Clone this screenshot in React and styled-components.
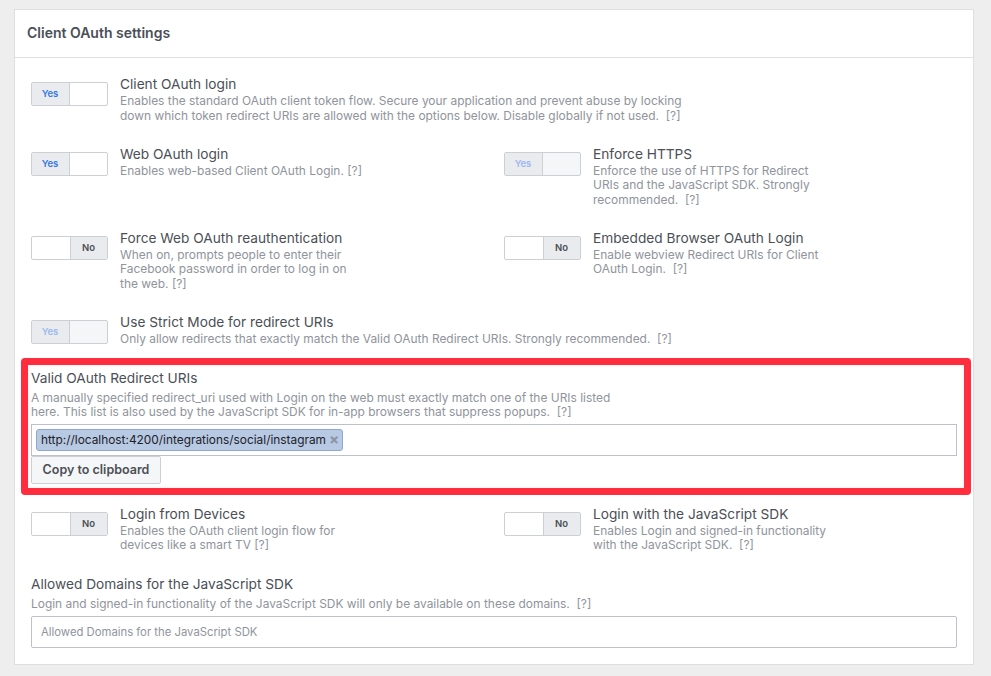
import styled, { createGlobalStyle } from "styled-components";

const GlobalStyle = createGlobalStyle`
  html, body { margin: 0; padding: 0; background: #eeeeee; }
  body { font-family: Inter, "Liberation Sans", sans-serif; }
`;

const Page = styled.div`
  width: 991px;
  height: 676px;
  padding: 9px 17px 0 14px;
  box-sizing: border-box;
  overflow: hidden;
`;

const Panel = styled.section`
  background: #ffffff;
  border: 1px solid #dddfe2;
  box-sizing: border-box;
  height: 656px;
`;

const PanelHeader = styled.h2`
  margin: 0;
  height: 45px;
  padding: 0 0 2px 12px;
  border-bottom: 1px solid #dddfe2;
  display: flex;
  align-items: center;
  font-size: 14px;
  font-weight: 600;
  color: #4b4f56;
`;

const PanelBody = styled.div`
  padding: 18px 16px 0;
`;

const Grid = styled.div`
  display: grid;
  grid-template-columns: 473px 1fr;
  row-gap: 22.7px;
  margin-top: ${(p) => p.$top || 0}px;
`;

const Setting = styled.div`
  display: flex;
  gap: 12px;
  grid-column: ${(p) => (p.$wide ? "1 / -1" : "auto")};
`;

const Toggle = styled.div`
  flex: none;
  width: 77px;
  height: 24px;
  margin-top: 6px;
  box-sizing: border-box;
  display: flex;
  justify-content: ${(p) => (p.$on ? "flex-start" : "flex-end")};
  border: 1px solid #ccd0d5;
  border-radius: 2px;
  background: ${(p) => (p.$disabled ? "#f5f6f7" : "#ffffff")};
`;

const Knob = styled.span`
  width: ${(p) => (p.$on ? 38 : 37)}px;
  box-sizing: border-box;
  padding: 0 1px 1px 0;
  display: flex;
  align-items: center;
  justify-content: center;
  background: #e9ebee;
  font-size: 9.5px;
  font-weight: 600;
  border-${(p) => (p.$on ? "right" : "left")}: 1px solid #ccd0d5;
  color: ${(p) => (p.$on ? (p.$disabled ? "#9cb9f0" : "#3578e5") : "#4b4f56")};
`;

const Label = styled.div`
  font-size: 13.7px;
  line-height: 16px;
  color: #4b4f56;
`;

const Help = styled.div`
  font-size: 11.95px;
  line-height: 14.5px;
  color: #90949c;
  margin-top: ${(p) => p.$top || 2}px;
`;

const Field = styled.div`
  position: relative;
  margin-top: 23px;
`;

const Highlight = styled.div`
  position: absolute;
  top: -12px;
  left: -10px;
  right: -14px;
  bottom: -11px;
  border: 7px solid #ff2d3d;
  border-radius: 4px;
  box-shadow: inset 0 0 4px rgba(0, 0, 0, 0.08);
  pointer-events: none;
`;

const TokenBox = styled.div`
  height: 32px;
  margin-top: 4px;
  box-sizing: border-box;
  border: 1px solid #bdc1c9;
  padding: 4px;
  display: flex;
  align-items: flex-start;
`;

const Token = styled.span`
  height: 22px;
  box-sizing: border-box;
  padding: 0 3px 0 4px;
  display: inline-flex;
  align-items: center;
  gap: 3px;
  background: #b8c9e3;
  border: 1px solid #8fa8d2;
  border-radius: 3px;
  font-size: 11.88px;
  color: #1d2129;
`;

const TokenClose = styled.span`
  color: #8b93a5;
  font-size: 15px;
  line-height: 1;
  font-weight: 700;
`;

const Button = styled.button`
  display: block;
  width: 130px;
  height: 28px;
  padding: 0;
  box-sizing: border-box;
  background: #f5f6f7;
  border: 1px solid #ccd0d5;
  border-radius: 2px;
  font-family: inherit;
  font-size: 12.5px;
  font-weight: 600;
  color: #4b4f56;
`;

const TextInput = styled.input`
  display: block;
  width: 100%;
  height: 32px;
  margin-top: 5px;
  box-sizing: border-box;
  border: 1px solid #bdc1c9;
  border-radius: 2px;
  padding: 0 9px;
  font-family: inherit;
  font-size: 11.3px;
  &::placeholder { color: #90949c; opacity: 1; }
`;

const Switch = ({ on, disabled }) => (
  <Toggle $on={on} $disabled={disabled}>
    <Knob $on={on} $disabled={disabled}>{on ? "Yes" : "No"}</Knob>
  </Toggle>
);

const Item = ({ on, disabled, wide, title, children }) => (
  <Setting $wide={wide}>
    <Switch on={on} disabled={disabled} />
    <div>
      <Label>{title}</Label>
      <Help>{children}</Help>
    </div>
  </Setting>
);

export default function App() {
  return (
    <Page>
      <GlobalStyle />
      <Panel>
        <PanelHeader>Client OAuth settings</PanelHeader>
        <PanelBody>
          <Grid>
            <Item on wide title="Client OAuth login">
              Enables the standard OAuth client token flow. Secure your application and prevent abuse by locking<br />
              down which token redirect URIs are allowed with the options below. Disable globally if not used.&nbsp; [?]
            </Item>
            <Item on title="Web OAuth login">
              Enables web-based Client OAuth Login. [?]
            </Item>
            <Item on disabled title="Enforce HTTPS">
              Enforce the use of HTTPS for Redirect<br />
              URIs and the JavaScript SDK. Strongly<br />
              recommended.&nbsp; [?]
            </Item>
            <Item title="Force Web OAuth reauthentication">
              When on, prompts people to enter their<br />
              Facebook password in order to log in on<br />
              the web. [?]
            </Item>
            <Item title="Embedded Browser OAuth Login">
              Enable webview Redirect URIs for Client<br />
              OAuth Login.&nbsp; [?]
            </Item>
            <Item on disabled wide title="Use Strict Mode for redirect URIs">
              Only allow redirects that exactly match the Valid OAuth Redirect URIs. Strongly recommended.&nbsp; [?]
            </Item>
          </Grid>

          <Field>
            <Label>Valid OAuth Redirect URIs</Label>
            <Help $top={5}>
              A manually specified redirect_uri used with Login on the web must exactly match one of the URIs listed<br />
              here. This list is also used by the JavaScript SDK for in-app browsers that suppress popups.&nbsp; [?]
            </Help>
            <TokenBox>
              <Token>
                http://localhost:4200/integrations/social/instagram
                <TokenClose>×</TokenClose>
              </Token>
            </TokenBox>
            <Button>Copy to clipboard</Button>
            <Highlight />
          </Field>

          <Grid $top={22}>
            <Item title="Login from Devices">
              Enables the OAuth client login flow for<br />
              devices like a smart TV [?]
            </Item>
            <Item title="Login with the JavaScript SDK">
              Enables Login and signed-in functionality<br />
              with the JavaScript SDK.&nbsp; [?]
            </Item>
          </Grid>

          <Field>
            <Label>Allowed Domains for the JavaScript SDK</Label>
            <Help $top={5}>
              Login and signed-in functionality of the JavaScript SDK will only be available on these domains.&nbsp; [?]
            </Help>
            <TextInput placeholder="Allowed Domains for the JavaScript SDK" />
          </Field>
        </PanelBody>
      </Panel>
    </Page>
  );
}
